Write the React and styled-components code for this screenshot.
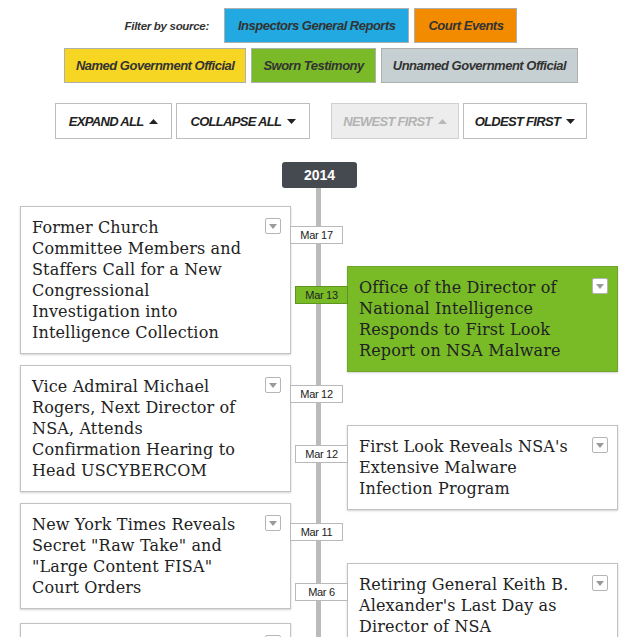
import React from "react";
import styled, { createGlobalStyle } from "styled-components";

const GlobalStyle = createGlobalStyle`
  html, body {
    margin: 0;
    padding: 0;
    background: #ffffff;
  }
  body {
    font-family: "Liberation Sans", Arial, sans-serif;
    color: #222;
  }
`;

const Page = styled.div`
  width: 642px;
  padding-top: 8px;
`;

const FilterBar = styled.div`
  display: flex;
  flex-direction: column;
  align-items: center;
  gap: 5px;
`;

const FilterRow = styled.div`
  display: flex;
  align-items: center;
  gap: 5px;
`;

const FilterLabel = styled.span`
  font-size: 11.5px;
  font-weight: bold;
  font-style: italic;
  letter-spacing: -0.3px;
  color: #333;
  margin-right: 10px;
`;

const SourceButton = styled.button`
  height: 35px;
  padding: 0 ${(p) => p.$pad}px;
  border: 1px solid #aeb0b0;
  background: ${(p) => p.$color};
  font-family: inherit;
  font-size: 13px;
  font-weight: bold;
  font-style: italic;
  letter-spacing: -0.5px;
  color: #333;
  cursor: pointer;
`;

const Controls = styled.div`
  display: flex;
  justify-content: center;
  gap: 21px;
  margin-top: 20px;
`;

const ControlGroup = styled.div`
  display: flex;
  gap: 4px;
`;

const ControlButton = styled.button`
  height: 36px;
  padding: 0 ${(p) => p.$pad}px;
  display: flex;
  align-items: center;
  gap: 6px;
  border: 1px solid ${(p) => (p.disabled ? "#cfcfcf" : "#bdbdbd")};
  background: ${(p) => (p.disabled ? "#ededed" : "#fff")};
  font-family: inherit;
  font-size: 13px;
  font-weight: bold;
  font-style: italic;
  text-transform: uppercase;
  letter-spacing: -0.7px;
  color: ${(p) => (p.disabled ? "#b3b3b3" : "#222")};
`;

const Timeline = styled.div`
  margin: 23px 0 0 20px;
  width: 598px;
  background: linear-gradient(
    to right,
    transparent 296px,
    #bbbbbb 296px,
    #bbbbbb 301px,
    transparent 301px
  );
  min-height: 700px;
`;

const YearRow = styled.div`
  display: flex;
  justify-content: center;
  padding-left: 1px;
`;

const Year = styled.div`
  width: 75px;
  height: 26px;
  border-radius: 3px;
  background: #454a50;
  color: #fff;
  font-weight: bold;
  font-size: 14px;
  line-height: 26px;
  text-align: center;
`;

const Columns = styled.div`
  display: grid;
  grid-template-columns: 271px 271px;
  justify-content: space-between;
  margin-top: 18px;
`;

const Column = styled.div`
  display: flex;
  flex-direction: column;
  padding-top: ${(p) => p.$offset}px;
`;

const Card = styled.article`
  position: relative;
  display: flex;
  align-items: flex-start;
  gap: 8px;
  margin-top: ${(p) => p.$space}px;
  padding: 10px 9px 10px 11px;
  border: 1px solid ${(p) => (p.$highlight ? "#6ea52a" : "#c2c2c2")};
  background: ${(p) => (p.$highlight ? "#78bb27" : "#fff")};
  box-shadow: 0 1px 2px rgba(0, 0, 0, 0.18);
`;

const Title = styled.h3`
  flex: 1;
  margin: 0;
  font-family: "DejaVu Serif", "Liberation Serif", serif;
  font-weight: normal;
  font-size: 16px;
  line-height: 21px;
  letter-spacing: 0.15px;
  color: #222;
  white-space: pre-line;
`;

const Toggle = styled.button`
  flex: none;
  width: 16px;
  height: 16px;
  margin-top: 1px;
  padding: 0;
  display: flex;
  align-items: center;
  justify-content: center;
  border: 1px solid #b5b5b5;
  border-radius: 2px;
  background: #fff;
`;

const DateTag = styled.span`
  position: absolute;
  top: 19px;
  ${(p) => (p.$side === "left" ? "left: 100%;" : "right: 100%;")}
  width: 51px;
  height: 16px;
  border: 1px solid ${(p) => (p.$highlight ? "#5e951f" : "#b9b9b9")};
  background: ${(p) => (p.$highlight ? "#78bb27" : "#fff")};
  font-size: 11px;
  letter-spacing: -0.3px;
  line-height: 16px;
  text-align: center;
  color: #222;
`;

const Arrow = ({ up, color = "#222" }) => (
  <svg width="9" height="5" viewBox="0 0 9 5">
    <polygon points={up ? "0,5 9,5 4.5,0" : "0,0 9,0 4.5,5"} fill={color} />
  </svg>
);

const sources = [
  [
    { label: "Inspectors General Reports", color: "#22a9e1" },
    { label: "Court Events", color: "#f28b00" },
  ],
  [
    { label: "Named Government Official", color: "#f6d523" },
    { label: "Sworn Testimony", color: "#7aba28" },
    { label: "Unnamed Government Official", color: "#c6d0d2" },
  ],
];

const leftEvents = [
  {
    date: "Mar 17",
    space: 0,
    title:
      "Former Church\nCommittee Members and\nStaffers Call for a New\nCongressional\nInvestigation into\nIntelligence Collection",
  },
  {
    date: "Mar 12",
    space: 11,
    title:
      "Vice Admiral Michael\nRogers, Next Director of\nNSA, Attends\nConfirmation Hearing to\nHead USCYBERCOM",
  },
  {
    date: "Mar 11",
    space: 11,
    title:
      'New York Times Reveals\nSecret "Raw Take" and\n"Large Content FISA"\nCourt Orders',
  },
  {
    date: "Mar 4",
    space: 14,
    title: "Senate Intelligence\nCommittee Hearing on\nSurveillance Reform",
  },
];

const rightEvents = [
  {
    date: "Mar 13",
    space: 0,
    highlight: true,
    title:
      "Office of the Director of\nNational Intelligence\nResponds to First Look\nReport on NSA Malware",
  },
  {
    date: "Mar 12",
    space: 53,
    title: "First Look Reveals NSA's\nExtensive Malware\nInfection Program",
  },
  {
    date: "Mar 6",
    space: 53,
    title: "Retiring General Keith B.\nAlexander's Last Day as\nDirector of NSA",
  },
];

const Event = ({ event, side }) => (
  <Card $space={event.space} $highlight={event.highlight}>
    <Title>{event.title}</Title>
    <Toggle aria-label="Expand">
      <svg width="8" height="5" viewBox="0 0 8 5">
        <polygon points="0,0 8,0 4,5" fill="#9a9a9a" />
      </svg>
    </Toggle>
    <DateTag $side={side} $highlight={event.highlight}>
      {event.date}
    </DateTag>
  </Card>
);

export default function App() {
  return (
    <Page>
      <GlobalStyle />
      <FilterBar>
        <FilterRow>
          <FilterLabel>Filter by source:</FilterLabel>
          {sources[0].map((s) => (
            <SourceButton key={s.label} $color={s.color} $pad={13}>
              {s.label}
            </SourceButton>
          ))}
        </FilterRow>
        <FilterRow>
          {sources[1].map((s) => (
            <SourceButton key={s.label} $color={s.color} $pad={11}>
              {s.label}
            </SourceButton>
          ))}
        </FilterRow>
      </FilterBar>

      <Controls>
        <ControlGroup>
          <ControlButton $pad={13}>
            Expand all <Arrow up />
          </ControlButton>
          <ControlButton $pad={13}>
            Collapse all <Arrow />
          </ControlButton>
        </ControlGroup>
        <ControlGroup>
          <ControlButton disabled $pad={11}>
            Newest first <Arrow up color="#b8b8b8" />
          </ControlButton>
          <ControlButton $pad={11}>
            Oldest first <Arrow />
          </ControlButton>
        </ControlGroup>
      </Controls>

      <Timeline>
        <YearRow>
          <Year>2014</Year>
        </YearRow>
        <Columns>
          <Column $offset={0}>
            {leftEvents.map((e) => (
              <Event key={e.date + e.title} event={e} side="left" />
            ))}
          </Column>
          <Column $offset={60}>
            {rightEvents.map((e) => (
              <Event key={e.date + e.title} event={e} side="right" />
            ))}
          </Column>
        </Columns>
      </Timeline>
    </Page>
  );
}
